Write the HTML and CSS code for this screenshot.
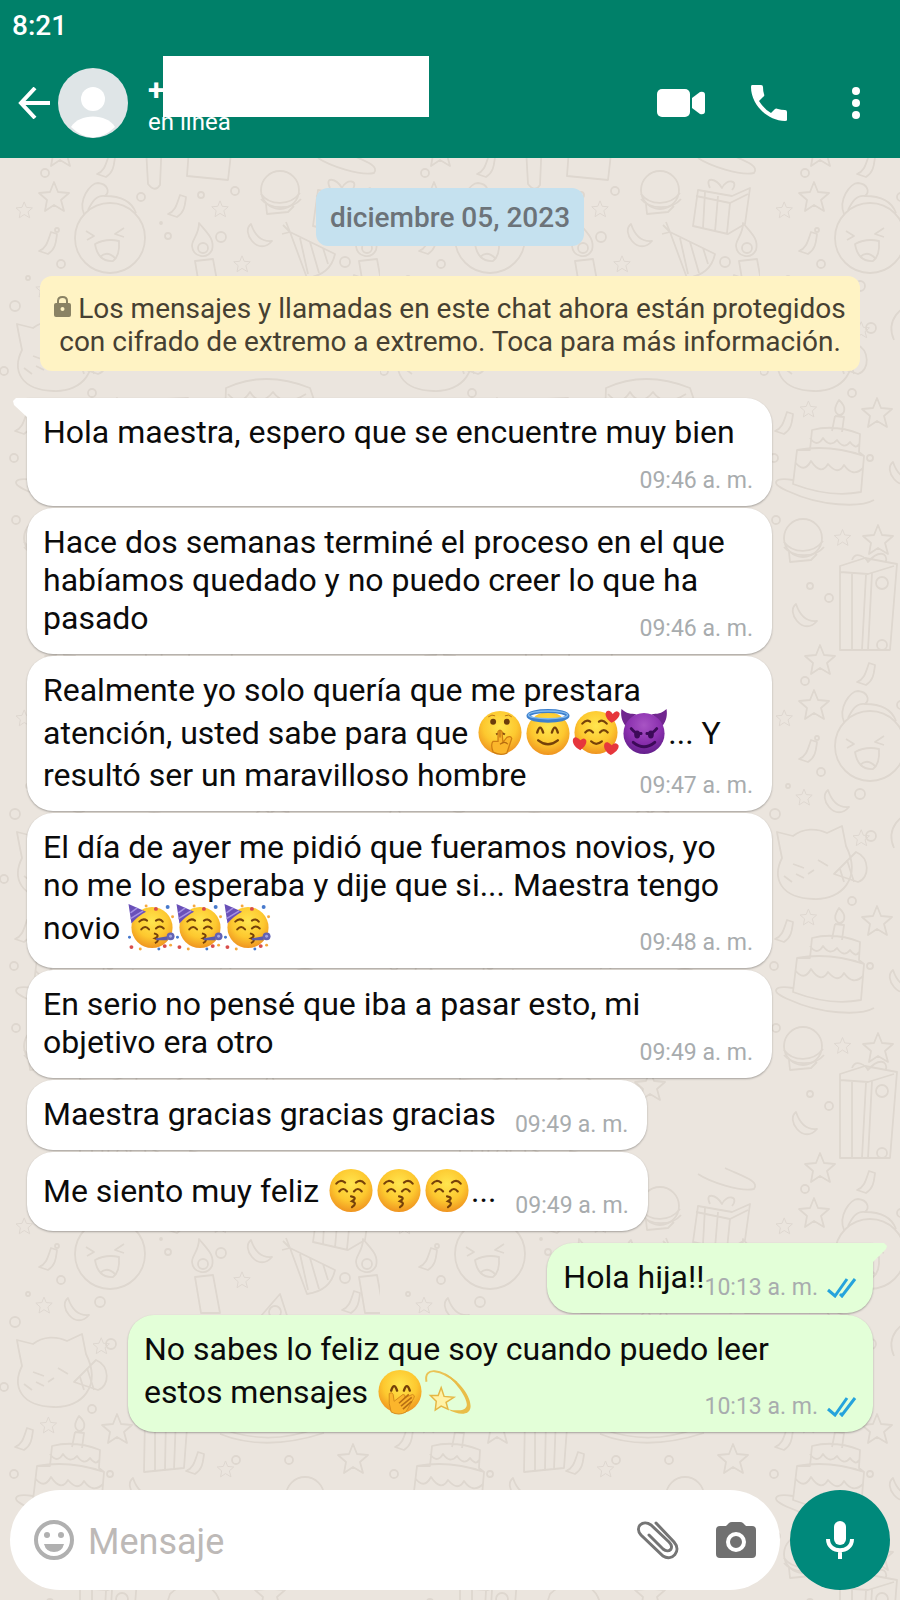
FILE: index.html
```html
<!DOCTYPE html>
<html lang="es">
<head>
<meta charset="utf-8">
<meta name="viewport" content="width=device-width, initial-scale=1">
<title>Chat</title>
<link rel="stylesheet" href="styles.css">
</head>
<body>
<svg class="sprite" width="0" height="0" aria-hidden="true">
  <defs>
    <radialGradient id="skin" cx="50%" cy="35%" r="65%">
      <stop offset="0" stop-color="#ffe64f"/><stop offset=".6" stop-color="#fdc82f"/><stop offset="1" stop-color="#ef9420"/>
    </radialGradient>
    <radialGradient id="violet" cx="50%" cy="30%" r="70%">
      <stop offset="0" stop-color="#a854c4"/><stop offset=".6" stop-color="#8a2fae"/><stop offset="1" stop-color="#64208c"/>
    </radialGradient>
    <path id="star" d="M0-15 4-5 15-4 7 3 10 14 0 8-9 14-7 3-15-4-4-5Z"/>
    <path id="ribbon" d="M3-11 9-9C8-2 8 6 0 11L-9 8C-1 5 0-3 3-11Z"/>
    <path id="moon" d="M-9-12C-5 0 2 6 12 5 6 12-2 12-8 5-13-1-14-8-9-12Z"/>
    <g id="ball"><circle r="19"/><path d="M-19 4C-10 16 10 16 20 3M-19 9C-10 20 12 20 21 9M-14 14-13 24 8 22 14 16"/></g>
    <g id="flame"><path d="M-4-18C4-8 12-2 9 9 4 19-10 16-11 5-11-2-4-6-4-18Z"/><circle cy="7" r="5"/><path d="M-8 20 10 18 17 56H-2Z"/></g>
  </defs>
  <symbol id="shush" viewBox="0 0 48 48">
    <circle cx="24" cy="24" r="22" fill="url(#skin)"/>
    <ellipse cx="17" cy="13" rx="3" ry="3" fill="#6b3d0c"/><ellipse cx="31" cy="13" rx="3" ry="3" fill="#6b3d0c"/>
    <path d="M12 8q4-3 7-1M29 7q4-2 7 1" fill="none" stroke="#b87518" stroke-width="1"/>
    <path d="M20 26q5-3 9 0" fill="none" stroke="#80490e" stroke-width="2"/>
    <path d="M22 23q2-3 4 0l1 11 4-5q4-2 5 1l-5 15q-7 3-14-1-3-8 0-11h5Z" fill="#fbb62b" stroke="#ce7d12" stroke-width="1.3"/>
    <path d="M24 36q5-4 8 0M24 22v7" fill="none" stroke="#b56a10" stroke-width="1.2"/>
  </symbol>
  <symbol id="angel" viewBox="0 0 48 48">
    <circle cx="24" cy="25" r="22" fill="url(#skin)"/>
    <ellipse cx="24" cy="7" rx="20" ry="5" fill="none" stroke="#3d80cd" stroke-width="4"/>
    <ellipse cx="24" cy="6" rx="20" ry="4" fill="none" stroke="#82b9ed" stroke-width="1.5"/>
    <path d="M13 24q3-10 6 0M28 24q3-10 6 0M14 32q10 8 20 0" fill="none" stroke="#754109" stroke-width="2.5" stroke-linecap="round"/>
  </symbol>
  <symbol id="love" viewBox="0 0 48 48">
    <circle cx="24" cy="24" r="22" fill="url(#skin)"/>
    <path d="M10 15q4-5 8-2M27 13q4-3 8 2M13 24q4-5 8 0M28 24q4-5 8 0M19 33q5 5 11 0" fill="none" stroke="#754109" stroke-width="2.2" stroke-linecap="round"/>
    <g fill="#e6363c"><path d="M40 14C31 8 33 0 38 2q2 1 3 3 4-5 7-1c1 4-4 8-8 10Z"/><path d="M8 42C-2 37-1 28 4 29q3 1 4 3 4-4 6 0c1 4-3 8-6 10Z"/><path d="M39 47C30 42 31 33 36 34q2 1 4 3 4-4 7 0c1 4-4 8-8 10Z"/></g>
  </symbol>
  <symbol id="devil" viewBox="0 0 48 48">
    <path d="M5 17C1 12 0 6 1 0 6 5 11 5 16 5ZM43 17c4-5 5-11 4-17-5 5-10 5-15 5Z" fill="#71268f"/>
    <circle cx="24" cy="25" r="21" fill="url(#violet)"/>
    <path d="M11 20q5 6 10 5M37 20q-5 6-10 5M13 34q11 9 22 0" fill="none" stroke="#3c0a58" stroke-width="3" stroke-linecap="round"/>
    <ellipse cx="17" cy="26" rx="3" ry="4" fill="#3c0a58"/><ellipse cx="31" cy="26" rx="3" ry="4" fill="#3c0a58"/>
  </symbol>
  <symbol id="party" viewBox="0 0 48 48">
    <circle cx="24" cy="24" r="21" fill="url(#skin)"/>
    <path d="M0 0 18 8Q10 12 3 20Z" fill="#6950b8"/><path d="M2 9 9 4M2 15 15 7" stroke="#a590e4" stroke-width="1.5"/>
    <path d="M11 18q4-4 8-1M28 17q4-3 7 1M13 26q4-5 8 0M28 25q4-4 8 0" fill="none" stroke="#754109" stroke-width="2" stroke-linecap="round"/>
    <path d="M26 30q7 2 1 5 6 2 0 5" fill="none" stroke="#754109" stroke-width="2"/>
    <path d="M28 35 40 33v4L28 37Z" fill="#5c5aaa"/><circle cx="43" cy="33" r="4" fill="#6262b4"/><circle cx="43" cy="33" r="1.5" fill="#a5a5df"/>
    <g fill="#d84d4b"><circle cx="28" cy="5" r="2"/><circle cx="3" cy="44" r="2"/><circle cx="37" cy="43" r="2"/></g>
    <g fill="#4779cc"><circle cx="40" cy="3" r="2"/><circle cx="1" cy="34" r="1.5"/><circle cx="31" cy="46" r="1.5"/></g>
    <g fill="#f5a93e"><circle cx="18" cy="2" r="1.5"/><circle cx="45" cy="13" r="1.5"/><circle cx="43" cy="42" r="1.5"/><circle cx="12" cy="46" r="1.5"/></g>
  </symbol>
  <symbol id="kiss" viewBox="0 0 48 48">
    <circle cx="24" cy="24" r="22" fill="url(#skin)"/>
    <path d="M9 17q4-5 9-1M29 16q5-4 9 1M12 25q4-5 8 0M27 25q4-5 8 0M24 30q7 1 1 5 6 2 0 6" fill="none" stroke="#754109" stroke-width="2.2" stroke-linecap="round"/>
  </symbol>
  <symbol id="giggle" viewBox="0 0 48 48">
    <circle cx="24" cy="24" r="22" fill="url(#skin)"/>
    <path d="M15 23q3-9 6 0M28 23q3-9 6 0" fill="none" stroke="#754109" stroke-width="2.5" stroke-linecap="round"/>
    <path d="M13 36V26q3-2 4 1l1 7 9-7q3 0 2 3l8-3q3 1 1 4l-8 14q-7 4-15 0Z" fill="#fbb52c" stroke="#d48a1c" stroke-width="1"/>
    <path d="M23 36 33 27M25 39 36 30M27 42 36 34" stroke="#b86f13" stroke-width="1.7"/>
  </symbol>
  <symbol id="dizzy" viewBox="0 0 48 48">
    <path d="M2 14C-1-2 17 1 33 15" fill="none" stroke="#eac356" stroke-width="2"/>
    <path d="M20 5C38 14 48 31 47 40 46 49 34 48 24 42 33 44 41 44 43 39 45 32 33 15 20 5Z" fill="#e9bd48"/>
    <path d="M17 20 20 29 30 30 22 35 24 42 17 39 11 43 12 34 6 28 14 28Z" fill="#fff2a6" stroke="#e5b744" stroke-width="1.5"/>
  </symbol>
  <symbol id="ticks" viewBox="0 0 30 20">
    <path d="M1 12 8 18 20 1M13 16 15 18 28 1" fill="none" stroke="#26a3dc" stroke-width="3"/>
  </symbol>
</svg>

<div class="app">
  <svg class="wallpaper" aria-hidden="true">
    <defs>
      <pattern id="doodles" width="380" height="508" patternUnits="userSpaceOnUse">
        <g fill="none" stroke="#ded7cf" stroke-width="1.8" stroke-linejoin="round">
          <!-- laughing face -->
          <circle cx="110" cy="238" r="35"/>
          <path d="M84 214C78 200 90 183 98 183 108 184 110 192 105 196 122 196 132 202 136 213M105 196C96 195 92 202 88 210M86 231 94 236 87 240M124 228 115 234 124 237M95 244Q106 238 119 241 120 256 113 261 98 262 95 244ZM100 257Q107 250 115 258"/>
          <!-- cat with party horn -->
          <path d="M22 350C20 340 18 331 17 324L33 328C43 320 57 320 67 325L82 318 86 338C102 370 82 392 54 391 20 390 12 370 22 350ZM33 356 44 360M58 352 68 358M48 366 54 362M74 366 96 344C110 350 110 370 98 374Z"/>
          <path d="M80 361 84 374M87 352 94 374M36 366 44 370M24 368 32 374"/>
          <!-- birthday cake -->
          <path d="M79 400C88 408 84 415 79 415 73 412 75 406 79 400ZM75 416 84 417 82 432M75 416 72 431M52 430Q75 424 100 434L99 452 104 456 101 492Q70 498 33 484L37 450 50 450ZM50 438Q57 448 63 438 70 448 77 440 84 450 90 442 96 450 99 444M37 450Q70 444 104 456M35 462Q44 474 51 461 61 476 68 464 78 476 84 465 93 478 103 468M33 480C13 477 9 484 30 492 60 506 100 508 114 500"/>
          <!-- tall gift -->
          <path d="M80 58 105 50 137 56 130 142H80ZM80 64 108 66 134 58M92 64V142M106 66 102 142M112 65 108 142M92 52C96 42 106 50 108 54 118 42 128 44 126 54"/>
          <!-- upright gift -->
          <path d="M145 400 188 398 184 452 144 456ZM155 400V454M166 400 165 454M176 400 174 454"/>
          <!-- cube gift -->
          <path d="M318 190 352 196 370 188 365 224 348 234 313 226ZM316 196 350 203 368 194M350 203 347 233M325 192 323 228M338 196 335 232M330 188C324 176 336 178 342 188 346 178 360 180 352 190"/>
          <!-- party hats and pizza -->
          <path d="M290 232 335 254C332 268 322 276 307 278ZM300 238 308 274M310 242 319 273M323 248 328 264M283 225 290 232 286 222M290 232 282 234"/>
          <path d="M280 278 248 315H292ZM258 304Q264 298 270 306 276 298 288 305"/><circle cx="275" cy="296" r="6"/>
          <!-- cake on a plate -->
          <path d="M226 388Q265 370 310 388L318 412Q270 430 225 414ZM228 394Q240 408 250 392 260 408 273 392 284 408 306 394M220 418Q265 436 324 417"/>
          <path d="M145 130 162 138 160 185Q155 193 148 184ZM190 135 232 145 228 180 187 176ZM318 158C330 166 360 176 374 173 380 165 362 160 345 152"/>
          <path d="M134 340C125 320 142 304 155 305 168 305 177 318 174 334M170 70C198 44 230 68 218 98 190 120 158 100 170 70Z"/>
          <use href="#ball" x="43" y="30"/><use href="#ball" x="280" y="190"/><use href="#ball" x="305" y="480"/>
          <use href="#flame" x="203" y="241"/><use href="#flame" x="367" y="241"/>
          <use href="#star" x="54" y="197"/><use href="#star" x="60" y="152"/><use href="#star" x="117" y="413"/><use href="#star" x="353" y="443"/><use href="#star" x="118" y="32"/><use href="#star" x="270" y="70"/>
          <g transform="scale(.55)"><use href="#star" x="44" y="382"/><use href="#star" x="400" y="380"/><use href="#star" x="150" y="54"/><use href="#star" x="88" y="744"/><use href="#star" x="80" y="526"/><use href="#star" x="184" y="600"/><use href="#star" x="410" y="824"/><use href="#star" x="440" y="480"/><use href="#star" x="590" y="30"/></g>
          <use href="#ribbon" x="177" y="206"/><use href="#ribbon" x="48" y="243"/><use href="#ribbon" x="351" y="286"/><use href="#ribbon" x="24" y="423"/><use href="#ribbon" x="195" y="447"/><use href="#ribbon" x="106" y="166"/>
          <use href="#moon" x="260" y="236"/><use href="#moon" x="77" y="294"/><use href="#moon" x="45" y="108"/><use href="#moon" x="142" y="474"/>
          <circle cx="45" cy="173" r="4"/><circle cx="141" cy="197" r="4"/><circle cx="201" cy="195" r="3"/><circle cx="235" cy="191" r="4"/><circle cx="221" cy="237" r="5"/><circle cx="100" cy="286" r="5"/><circle cx="61" cy="264" r="4"/><circle cx="15" cy="306" r="5"/><circle cx="28" cy="278" r="2"/><circle cx="57" cy="230" r="2"/><circle cx="161" cy="223" r="1"/><circle cx="168" cy="236" r="3"/><circle cx="345" cy="262" r="5"/><circle cx="111" cy="328" r="5"/><circle cx="4" cy="371" r="4"/><circle cx="92" cy="393" r="4"/><circle cx="236" cy="444" r="4"/><circle cx="289" cy="444" r="4"/><circle cx="14" cy="458" r="4"/><circle cx="110" cy="458" r="3"/><circle cx="244" cy="484" r="3"/><circle cx="69" cy="90" r="4"/><circle cx="122" cy="75" r="6"/><circle cx="122" cy="137" r="5"/><circle cx="50" cy="78" r="3"/><circle cx="16" cy="12" r="4"/>
        </g>
      </pattern>
    </defs>
    <rect width="100%" height="100%" fill="url(#doodles)"/>
  </svg>

  <header class="top">
    <div class="status-bar">8:21</div>
    <div class="app-bar">
      <button class="icon-btn back" aria-label="Atrás">
        <svg width="32" height="32" viewBox="0 0 32 32" fill="none" stroke="#fff" stroke-width="4"><path d="M17 1 3 16 17 31M3 16H32"/></svg>
      </button>
      <svg class="avatar" width="70" height="70" viewBox="0 0 70 70" role="img" aria-label="Foto de perfil">
        <circle cx="35" cy="35" r="35" fill="#dfe5e7"/><circle cx="35" cy="31" r="12" fill="#fff"/><path d="M13 59C21 45 49 45 57 59Q35 80 13 59Z" fill="#fff"/>
      </svg>
      <div class="contact">
        <div class="name">+</div>
        <div class="presence">en línea</div>
        <div class="redaction"></div>
      </div>
      <div class="actions">
        <button class="icon-btn" aria-label="Videollamada">
          <svg width="48" height="28" viewBox="0 0 48 28" fill="#fff"><rect width="33" height="28" rx="5"/><path d="M35 9 43 3Q48 2 48 6V22Q48 26 43 25L35 19Z"/></svg>
        </button>
        <button class="icon-btn" aria-label="Llamar">
          <svg width="36" height="36" viewBox="0 0 36 36" fill="#fff"><path d="M1 0H10Q12 0 12 2 12 6 13 9 14 11 12 12L8 16Q13 24 20 28L24 24Q25 23 27 24 30 25 34 25 36 25 36 27V35Q36 36 34 36C16 36 0 19 0 2Q0 0 1 0Z"/></svg>
        </button>
        <button class="icon-btn more" aria-label="Más opciones">
          <svg width="10" height="34" viewBox="0 0 10 34" fill="#fff"><circle cx="5" cy="5" r="4"/><circle cx="5" cy="17" r="4"/><circle cx="5" cy="29" r="4"/></svg>
        </button>
      </div>
    </div>
  </header>

  <main class="chat">
    <div class="date">diciembre 05, 2023</div>
    <p class="notice"><svg class="lock" width="17" height="22" viewBox="0 0 17 22"><path d="M4 9V6Q4 2 8.500 2T13 6V9" fill="none" stroke="#8a8264" stroke-width="2"/><rect y="8" width="17" height="14" rx="2" fill="#8a8264"/><circle cx="8.500" cy="14" r="2" fill="#fff3c4"/></svg> Los mensajes y llamadas en este chat ahora están protegidos<br>con cifrado de extremo a extremo. Toca para más información.</p>

    <div class="msg in wide first tail-left"><p>Hola maestra, espero que se encuentre muy bien</p><time>09:46 a. m.</time></div>
    <div class="msg in wide"><p>Hace dos semanas terminé el proceso en el que<br>habíamos quedado y no puedo creer lo que ha<br>pasado</p><time>09:46 a. m.</time></div>
    <div class="msg in wide"><p>Realmente yo solo quería que me prestara<br>atención, usted sabe para que <svg class="emoji" role="img" aria-label="🤫"><use href="#shush"/></svg><svg class="emoji" role="img" aria-label="😇"><use href="#angel"/></svg><svg class="emoji" role="img" aria-label="🥰"><use href="#love"/></svg><svg class="emoji" role="img" aria-label="😈"><use href="#devil"/></svg>... Y<br>resultó ser un maravilloso hombre</p><time>09:47 a. m.</time></div>
    <div class="msg in wide"><p>El día de ayer me pidió que fueramos novios, yo<br>no me lo esperaba y dije que si... Maestra tengo<br>novio <svg class="emoji" role="img" aria-label="🥳"><use href="#party"/></svg><svg class="emoji" role="img" aria-label="🥳"><use href="#party"/></svg><svg class="emoji" role="img" aria-label="🥳"><use href="#party"/></svg></p><time>09:48 a. m.</time></div>
    <div class="msg in wide"><p>En serio no pensé que iba a pasar esto, mi<br>objetivo era otro</p><time>09:49 a. m.</time></div>
    <div class="msg in inline"><p>Maestra gracias gracias gracias</p><time>09:49 a. m.</time></div>
    <div class="msg in inline"><p>Me siento muy feliz <svg class="emoji" role="img" aria-label="😚"><use href="#kiss"/></svg><svg class="emoji" role="img" aria-label="😚"><use href="#kiss"/></svg><svg class="emoji" role="img" aria-label="😚"><use href="#kiss"/></svg>...</p><time>09:49 a. m.</time></div>
    <div class="msg out inline snug tail-right"><p>Hola hija!!</p><time>10:13 a. m. <svg class="ticks" role="img" aria-label="Leído"><use href="#ticks"/></svg></time></div>
    <div class="msg out wide"><p>No sabes lo feliz que soy cuando puedo leer<br>estos mensajes <svg class="emoji" role="img" aria-label="🤭"><use href="#giggle"/></svg><svg class="emoji" role="img" aria-label="💫"><use href="#dizzy"/></svg></p><time>10:13 a. m. <svg class="ticks" role="img" aria-label="Leído"><use href="#ticks"/></svg></time></div>
  </main>

  <form class="composer">
    <div class="field">
      <button type="button" class="icon-btn" aria-label="Emojis">
        <svg width="40" height="40" viewBox="0 0 40 40" fill="#b0b0b0"><circle cx="20" cy="20" r="18" fill="none" stroke="#b0b0b0" stroke-width="4"/><circle cx="13" cy="15" r="3"/><circle cx="27" cy="15" r="3"/><path d="M10 24H30Q28 32 20 32T10 24Z"/></svg>
      </button>
      <input type="text" placeholder="Mensaje" aria-label="Mensaje">
      <button type="button" class="icon-btn" aria-label="Adjuntar">
        <svg width="44" height="40" viewBox="0 0 44 40" fill="none" stroke="#757575" stroke-width="3" stroke-linecap="round"><path d="M20 3 38 22C46 31 36 42 27 36L5 15C-2 7 7-1 15 5L33 22C39 28 33 34 27 29L13 15"/></svg>
      </button>
      <button type="button" class="icon-btn" aria-label="Cámara">
        <svg width="40" height="36" viewBox="0 0 40 36"><path d="M4 4H10L13 1Q14 0 16 0H24Q26 0 27 1L30 4H36Q40 4 40 8V32Q40 36 36 36H4Q0 36 0 32V8Q0 4 4 4Z" fill="#707070"/><circle cx="20" cy="20" r="8" fill="none" stroke="#fff" stroke-width="4"/></svg>
      </button>
    </div>
    <button type="button" class="mic" aria-label="Mensaje de voz">
      <svg width="28" height="38" viewBox="0 0 28 38"><rect x="8" width="12" height="24" rx="6" fill="#fff"/><path d="M2 18C2 33 26 33 26 18M14 29V38" fill="none" stroke="#fff" stroke-width="4"/></svg>
    </button>
  </form>
</div>
</body>
</html>
```
FILE: styles.css
```css
* { box-sizing: border-box; }
body { margin: 0; font-family: Roboto, "Liberation Sans", sans-serif; background: #ebe5de; color: #0b0b0b; }
p { margin: 0; }
button { border: 0; padding: 0; background: none; cursor: pointer; }
svg { display: block; flex: none; }
.sprite { position: absolute; }
.app { position: relative; display: flex; flex-direction: column; min-height: 100vh; isolation: isolate; }
.wallpaper { position: absolute; inset: 0; width: 100%; height: 100%; z-index: -1; }

.top { background: #008069; color: #fff; }
.status-bar { height: 48px; padding-left: 12px; font-size: 28px; line-height: 52px; font-weight: 500; }
.app-bar { display: flex; align-items: center; height: 110px; padding: 0 39px 0 18px; }
.icon-btn { display: flex; align-items: center; justify-content: center; flex: none; }
.avatar { margin-left: 8px; }
.contact { position: relative; margin-left: 20px; padding-top: 2px; }
.name { font-size: 30px; line-height: 36px; font-weight: 700; }
.presence { font-size: 24px; line-height: 28px; }
.redaction { position: absolute; left: 15px; top: -14px; width: 266px; height: 61px; background: #fff; }
.actions { display: flex; align-items: center; gap: 46px; margin-left: auto; }
.more { margin-left: 18px; }

.chat { flex: 1; display: flex; flex-direction: column; gap: 2px; padding: 30px 27px 24px; }
.date { align-self: center; padding: 2px 14px 0; margin-bottom: 28px; border-radius: 12px; background: #c5e1ef; color: #6c7379; font-size: 28px; line-height: 56px; font-weight: 500; }
.notice { align-self: center; width: 820px; max-width: 100%; margin-bottom: 25px; padding: 16px 8px 13px; border-radius: 12px; background: #fff3c4; color: #464032; font-size: 28px; line-height: 33px; text-align: center; }
.lock { display: inline-block; vertical-align: 1px; }

.msg { position: relative; display: grid; max-width: 100%; border-radius: 26px; box-shadow: 0 1px 2px #0000004d; }
.msg p { grid-area: 1 / 1; padding: 15px 16px 17px; font-size: 32px; line-height: 38px; }
.msg time { grid-area: 1 / 1; align-self: end; justify-self: end; display: flex; align-items: center; gap: 9px; margin: 0 19px 11px 0; font-size: 23px; line-height: 28px; color: #a8acae; white-space: nowrap; }
.in { align-self: flex-start; background: #fff; }
.out { align-self: flex-end; background: #e3ffd8; }
.wide { width: 745px; }
.first p { padding-bottom: 55px; }
.inline { display: flex; }
.inline p { padding-right: 19px; }
.msg.snug p { padding-right: 0; }
.msg.out time { margin-right: 16px; }
.tail-left { border-top-left-radius: 0; }
.tail-right { border-top-right-radius: 0; margin-top: 10px; }
.tail-left::before, .tail-right::before { content: ""; position: absolute; top: 0; width: 15px; height: 20px; }
.tail-left::before { right: calc(100% - 1px); background: #fff; clip-path: polygon(0 3px, 3px 0, 100% 0, 100% 100%, 1px 7px); }
.tail-right::before { left: calc(100% - 1px); background: #e3ffd8; clip-path: polygon(0 0, 12px 0, 100% 3px, 14px 6px, 0 100%); }
.emoji { display: inline-block; width: 48px; height: 47px; vertical-align: -12px; }
.ticks { width: 30px; height: 20px; }

.composer { display: flex; align-items: center; gap: 10px; padding: 0 10px 10px; }
.field { flex: 1; min-width: 0; display: flex; align-items: center; gap: 36px; height: 100px; padding: 0 24px; border-radius: 50px; background: #fff; }
.field input { flex: 1; min-width: 0; margin-left: -22px; border: 0; padding: 3px 0 0; outline: 0; background: none; font: 36px Roboto, "Liberation Sans", sans-serif; color: #222; }
.field input::placeholder { color: #bdb9b7; opacity: 1; }
.mic { display: flex; align-items: center; justify-content: center; flex: none; width: 100px; height: 100px; border-radius: 50%; background: #00897b; }
```
